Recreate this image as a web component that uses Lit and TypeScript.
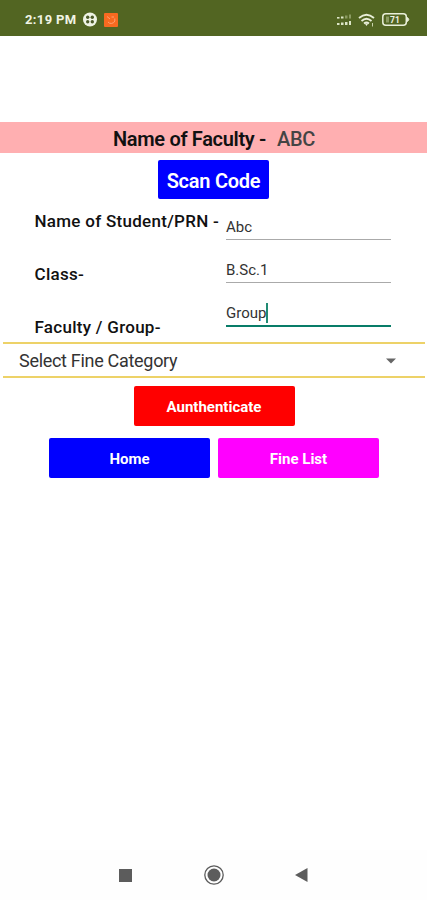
import { LitElement, html, css } from "lit";
import { customElement } from "lit/decorators.js";

@customElement("app-root")
export class AppRoot extends LitElement {
  static styles = css`
    :host {
      display: flex;
      flex-direction: column;
      width: 427px;
      height: 900px;
      overflow: hidden;
      background: #fff;
      color: #111;
      font-family: Roboto, "Liberation Sans", sans-serif;
      white-space: nowrap;
    }
    * { box-sizing: border-box; }
    svg { display: block; flex: none; }
    .status {
      height: 36px;
      flex: none;
      background: #526522;
      display: flex;
      align-items: center;
      padding: 3px 17px 0 25px;
      color: #f0f4e4;
    }
    .time { font-size: 13px; font-weight: 700; line-height: 16px; width: 57px; letter-spacing: 0.35px; }
    .app { margin-left: 6px; }
    .spacer { flex: 1; }
    .signal { margin-right: 5px; }
    .wifi { margin-right: 7px; }
    .banner {
      margin-top: 86px;
      height: 31px;
      flex: none;
      background: #ffafb1;
      display: flex;
      align-items: center;
      padding: 2px 0 0 113px;
      font-size: 20px;
      font-weight: 600;
      letter-spacing: -0.32px;
    }
    .banner .value { margin-left: 11px; color: #444; font-weight: 500; }
    .btn {
      display: flex;
      align-items: center;
      justify-content: center;
      height: 39.5px;
      flex: none;
      border: 0;
      border-radius: 2px;
      padding: 2px 0 0;
      color: #fff;
      font: 700 15px Roboto, "Liberation Sans", sans-serif;
    }
    .scan { height: 39px; width: 111px; margin: 7px auto 0 158px; font-size: 20px; font-weight: 600; letter-spacing: -0.25px; background: #00f; }
    .form { height: 143px; flex: none; display: flex; padding-left: 34.5px; }
    .labels { width: 191.5px; padding-top: 12px; display: flex; flex-direction: column; font-size: 17px; font-weight: 500; letter-spacing: 0.28px; gap: 33px; }
    .labels span { line-height: 20px; }
    .fields { width: 165px; display: flex; flex-direction: column; color: #333; font-size: 15px; }
    .field { height: 43px; padding-top: 21px; line-height: 18px; display: flex; border-bottom: 1px solid #aaa; }
    .field:first-child { height: 41px; padding-top: 19px; }
    .field.active { height: 44px; border-bottom: 2px solid #087c68; }
    .caret { width: 2px; height: 20px; background: #218b74; margin-top: -1px; }
    .select {
      margin: 0 2px 0 3px;
      height: 36px;
      flex: none;
      border-top: 2px solid #edd268;
      border-bottom: 2px solid #edd268;
      display: flex;
      align-items: center;
      justify-content: space-between;
      padding: 1px 29px 0 16px;
      font-size: 18px;
      letter-spacing: -0.3px;
      color: #333;
    }
    .auth { width: 161px; margin: 8px 0 0 133.5px; background: #f00; }
    .pair { display: flex; gap: 8px; margin: 12.5px 0 0 49px; }
    .pair .btn { width: 161px; }
    .home { background: #00f; }
    .fines { background: #f0f; }
    .nav {
      margin-top: auto;
      height: 50px;
      flex: none;
      background: #fefefe;
      display: flex;
      align-items: center;
      padding-left: 119px;
    }
    .ring { margin-left: 71px; }
    .back { margin-left: 70px; }
  `;

  render() {
    return html`
      <header class="status">
        <span class="time">2:19 PM</span>
        <svg width="16" height="15" viewBox="0 0 16 15">
          <circle cx="8" cy="7.5" r="7" fill="#eff3e5" />
          <g fill="#4d5b2a"><circle cx="5.7" cy="5.2" r="1.7" /><circle cx="10.3" cy="5.2" r="1.7" /><circle cx="5.7" cy="9.8" r="1.7" /><circle cx="10.3" cy="9.8" r="1.7" /></g>
        </svg>
        <svg class="app" width="14" height="14" viewBox="0 0 14 14">
          <rect width="14" height="14" rx="1" fill="#f76a20" />
          <path d="M3 3.5L6 6M10.8 5.5V8A4 4 0 0 1 4 9M7.5 4H10" fill="none" stroke="#ffa070" stroke-width="1" />
        </svg>
        <span class="spacer"></span>
        <svg class="signal" width="17" height="13" viewBox="0 0 17 13">
          <g fill="#dce5c6"><rect x="1" y="4" width="2.5" height="1.6" /><rect x="5" y="3.5" width="2.5" height="2" /><rect x="1" y="10" width="2.5" height="2" /><rect x="5" y="9.5" width="2.5" height="2.5" /><rect x="9" y="9" width="2.5" height="3" /><rect x="13" y="8" width="2" height="4" /></g>
          <g fill="#8b9b62"><rect x="9" y="2.5" width="2.5" height="3" /><rect x="13" y="1.5" width="2" height="4" /></g>
        </svg>
        <svg class="wifi" width="17" height="14" viewBox="0 0 17 14">
          <g fill="none" stroke="#e9efd9" stroke-width="1.8"><path d="M1 5Q8.5-1.5 16 5" /><path d="M3.5 8Q8.5 3.5 13.5 8" /><path d="M6 10.5Q8.5 8.5 11 10.5" /></g>
          <path d="M6.8 10.5H10.2L8.5 13Z" fill="#e9efd9" /><path d="M14.5 10V13.5" stroke="#c8d3ac" />
        </svg>
        <svg width="28" height="13" viewBox="0 0 28 13">
          <rect x="0.8" y="0.8" width="23.5" height="11.4" rx="3" fill="none" stroke="#e9efd9" stroke-width="1.5" />
          <path d="M25.5 4.5Q28 6.5 25.5 8.5Z" fill="#e9efd9" stroke="#e9efd9" />
          <rect x="4" y="3.5" width="3" height="6" fill="#8b9b62" />
          <text x="8" y="9.7" font-size="8.5" font-weight="700" fill="#f0f4e4">71</text>
        </svg>
      </header>
      <div class="banner"><span>Name of Faculty -</span><span class="value">ABC</span></div>
      <button class="btn scan">Scan Code</button>
      <section class="form">
        <div class="labels"><span>Name of Student/PRN -</span><span>Class-</span><span>Faculty / Group-</span></div>
        <div class="fields">
          <div class="field">Abc</div>
          <div class="field">B.Sc.1</div>
          <div class="field active">Group<span class="caret"></span></div>
        </div>
      </section>
      <div class="select">
        <span>Select Fine Category</span>
        <svg width="10" height="6" viewBox="0 0 10 6"><path d="M0 .5H10L5 5.5Z" fill="#666" /></svg>
      </div>
      <button class="btn auth">Aunthenticate</button>
      <div class="pair"><button class="btn home">Home</button><button class="btn fines">Fine List</button></div>
      <nav class="nav">
        <svg width="13" height="13" viewBox="0 0 13 13"><rect width="13" height="13" fill="#5c5c5c" /></svg>
        <svg class="ring" width="22" height="22" viewBox="0 0 22 22"><circle cx="11" cy="11" r="9.2" fill="none" stroke="#5c5c5c" stroke-width="1.3" /><circle cx="11" cy="11" r="6.5" fill="#5c5c5c" /></svg>
        <svg class="back" width="13" height="14" viewBox="0 0 13 14"><path d="M0 7L12.5 0V14Z" fill="#5c5c5c" /></svg>
      </nav>
    `;
  }
}
